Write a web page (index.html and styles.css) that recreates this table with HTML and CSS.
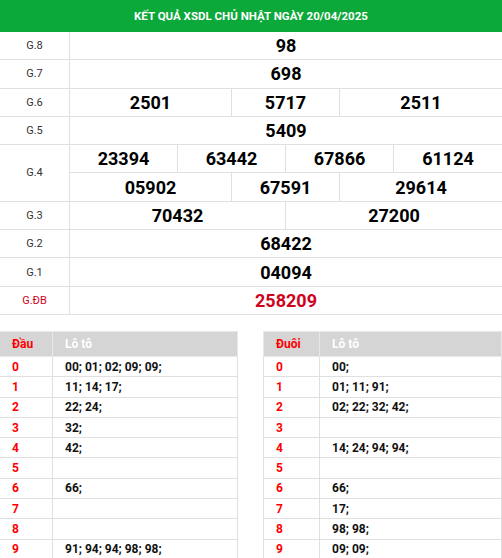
FILE: index.html
```html
<!DOCTYPE html>
<html lang="vi">
<head>
<meta charset="utf-8">
<title>KQ XSDL</title>
<link rel="stylesheet" href="styles.css">
</head>
<body>
<div class="header">KẾT QUẢ XSDL CHỦ NHẬT NGÀY 20/04/2025</div>
<div class="results">
  <div class="lbl">G.8</div><div class="num s8">98</div>
  <div class="lbl">G.7</div><div class="num s8">698</div>
  <div class="lbl">G.6</div><div class="num s3">2501</div><div class="num s2">5717</div><div class="num s3 last">2511</div>
  <div class="lbl">G.5</div><div class="num s8">5409</div>
  <div class="lbl r2">G.4</div><div class="num s2">23394</div><div class="num s2">63442</div><div class="num s2">67866</div><div class="num s2 last">61124</div>
  <div class="num s3">05902</div><div class="num s2">67591</div><div class="num s3 last">29614</div>
  <div class="lbl">G.3</div><div class="num s4">70432</div><div class="num s4 last">27200</div>
  <div class="lbl">G.2</div><div class="num s8">68422</div>
  <div class="lbl">G.1</div><div class="num s8">04094</div>
  <div class="lbl red">G.ĐB</div><div class="num s8 red">258209</div>
</div>
<div class="loto">
  <table class="lt left">
    <thead><tr><th class="k">Đầu</th><th class="v">Lô tô</th></tr></thead>
    <tbody>
      <tr><td class="k">0</td><td>00; 01; 02; 09; 09;</td></tr>
      <tr><td class="k">1</td><td>11; 14; 17;</td></tr>
      <tr><td class="k">2</td><td>22; 24;</td></tr>
      <tr><td class="k">3</td><td>32;</td></tr>
      <tr><td class="k">4</td><td>42;</td></tr>
      <tr><td class="k">5</td><td></td></tr>
      <tr><td class="k">6</td><td>66;</td></tr>
      <tr><td class="k">7</td><td></td></tr>
      <tr><td class="k">8</td><td></td></tr>
      <tr><td class="k">9</td><td>91; 94; 94; 98; 98;</td></tr>
    </tbody>
  </table>
  <table class="lt right">
    <thead><tr><th class="k">Đuôi</th><th class="v">Lô tô</th></tr></thead>
    <tbody>
      <tr><td class="k">0</td><td>00;</td></tr>
      <tr><td class="k">1</td><td>01; 11; 91;</td></tr>
      <tr><td class="k">2</td><td>02; 22; 32; 42;</td></tr>
      <tr><td class="k">3</td><td></td></tr>
      <tr><td class="k">4</td><td>14; 24; 94; 94;</td></tr>
      <tr><td class="k">5</td><td></td></tr>
      <tr><td class="k">6</td><td>66;</td></tr>
      <tr><td class="k">7</td><td>17;</td></tr>
      <tr><td class="k">8</td><td>98; 98;</td></tr>
      <tr><td class="k">9</td><td>09; 09;</td></tr>
    </tbody>
  </table>
</div>
</body>
</html>
```
FILE: styles.css
```css
* { box-sizing: border-box; }
body {
  margin: 0;
  font-family: Roboto, "Liberation Sans", Arial, sans-serif;
  background: #fff;
  color: #000;
}
.header {
  height: 32px;
  background: #0ba83a;
  color: #fff;
  font-weight: 700;
  font-size: 11.5px;
  display: flex;
  align-items: center;
  justify-content: center;
}
.results {
  display: grid;
  grid-template-columns: 70px repeat(8, 1fr);
  grid-auto-rows: 28.3px;
}
.results > div {
  border-bottom: 1px solid #e0e0e0;
  border-right: 1px solid #e0e0e0;
  display: flex;
  align-items: center;
  justify-content: center;
}
.results > .last { border-right: none; }
.lbl {
  grid-column: 1;
  font-size: 11px;
  color: #333;
}
.lbl.r2 { grid-row: span 2; }
.num {
  font-size: 18px;
  font-weight: 700;
  color: #000;
}
.results > .s8 { grid-column: span 8; border-right: none; }
.s4 { grid-column: span 4; }
.s3 { grid-column: span 3; }
.s2 { grid-column: span 2; }
.results > .red { color: #d0021b; }
.loto {
  margin-top: 16px;
  display: flex;
  justify-content: space-between;
}
.lt {
  width: 239px;
  border-collapse: collapse;
  font-size: 12px;
  font-weight: 700;
}
.lt.left { margin-left: -1px; }
.lt th, .lt td {
  border: 1px solid #e0e0e0;
  text-align: left;
  padding: 0 12px;
}
.lt th {
  background: #d5d5d5;
  height: 25px;
  border-color: #e8e8e8;
}
.lt td { height: 20.3px; color: #111; }
.lt th.k, .lt td.k { color: #ff0000; }
.lt th.v { color: #fff; }
.lt.left .k { width: 53px; }
.lt.right .k { width: 56px; }
```
